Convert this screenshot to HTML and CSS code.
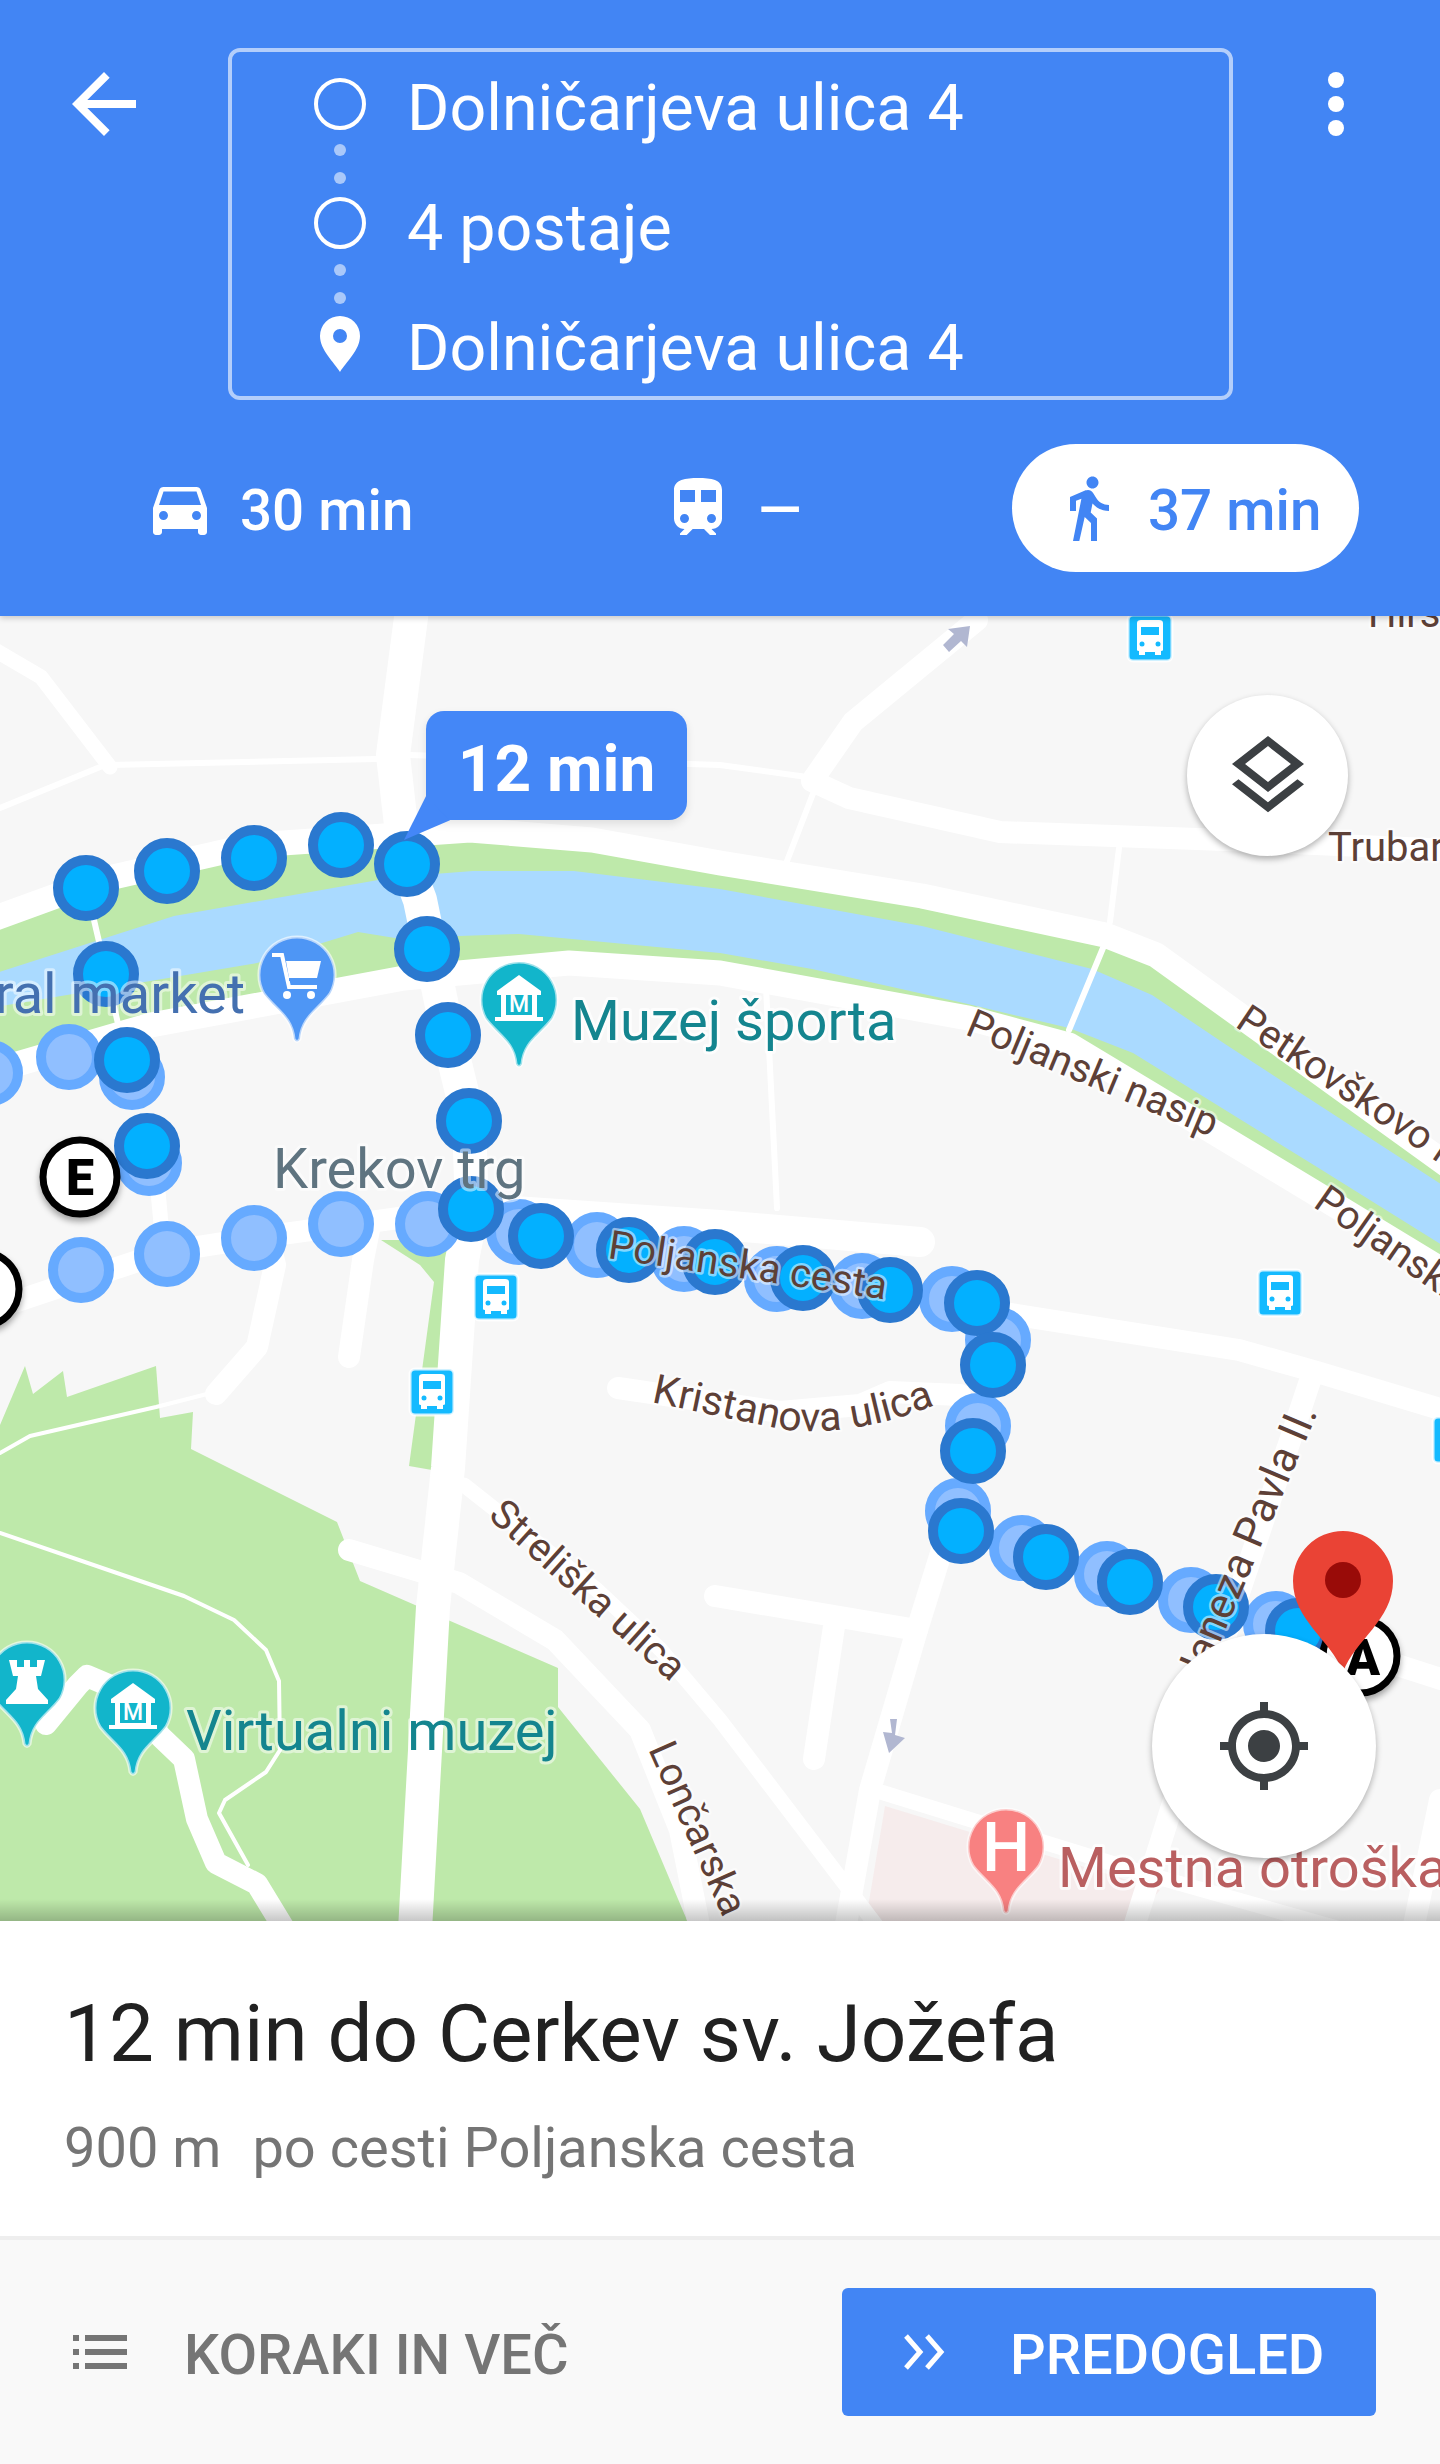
FILE: index.html
```html
<!DOCTYPE html>
<html lang="en">
<head>
    <meta charset="UTF-8">
    <meta name="viewport" content="width=device-width, initial-scale=1.0">
    <title>Dolničarjeva ulica 4</title>
    <link rel="stylesheet" href="styles.css">
</head>
<body>
    <header class="top">
        <div class="top-row">
            <svg class="icon-lg" viewBox="0 0 24 24"><path d="M20 11H7.83l5.59-5.59L12 4l-8 8 8 8 1.41-1.41L7.83 13H20v-2z"/></svg>
            <div class="stops">
                <svg class="stops-icons" viewBox="0 0 60 346">
                    <circle class="stop-ring" cx="30" cy="53" r="24"/>
                    <circle class="stop-dot" cx="30" cy="99" r="6"/>
                    <circle class="stop-dot" cx="30" cy="127" r="6"/>
                    <circle class="stop-ring" cx="30" cy="172" r="24"/>
                    <circle class="stop-dot" cx="30" cy="219" r="6"/>
                    <circle class="stop-dot" cx="30" cy="247" r="6"/>
                    <path class="stop-pin" fill-rule="evenodd" d="M30 265a20 20 0 0 1 20 20c0 14-14 26-20 36-6-10-20-22-20-36a20 20 0 0 1 20-20zm0 13a7 7 0 1 0 0 14 7 7 0 0 0 0-14z"/>
                </svg>
                <div class="stops-text">
                    <div>Dolničarjeva ulica 4</div>
                    <div>4 postaje</div>
                    <div>Dolničarjeva ulica 4</div>
                </div>
            </div>
            <svg class="icon-lg" viewBox="0 0 24 24"><circle cx="12" cy="6" r="2"/><circle cx="12" cy="12" r="2"/><circle cx="12" cy="18" r="2"/></svg>
        </div>
        <div class="modes">
            <div class="mode">
                <svg class="icon-md" viewBox="0 0 24 24"><path d="M18.92 6.01C18.72 5.42 18.16 5 17.5 5h-11c-.66 0-1.21.42-1.42 1.01L3 12v8c0 .55.45 1 1 1h1c.55 0 1-.45 1-1v-1h12v1c0 .55.45 1 1 1h1c.55 0 1-.45 1-1v-8l-2.08-5.99zM6.5 16c-.83 0-1.5-.67-1.5-1.5S5.67 13 6.5 13s1.5.67 1.5 1.5S7.33 16 6.5 16zm11 0c-.83 0-1.5-.67-1.5-1.5s.67-1.5 1.5-1.5 1.5.67 1.5 1.5-.67 1.5-1.5 1.5zM5 11l1.5-4.5h11L19 11H5z"/></svg>
                <span>30 min</span>
            </div>
            <div class="mode">
                <svg class="icon-md" viewBox="0 0 24 24"><path d="M12 2c-4 0-8 .5-8 4v9.5C4 17.43 5.57 19 7.5 19L6 20.5v.5h2.23l2-2H14l2 2h2v-.5L16.5 19c1.93 0 3.5-1.57 3.5-3.5V6c0-3.5-3.58-4-8-4zM7.5 17c-.83 0-1.5-.67-1.5-1.5S6.67 14 7.5 14s1.5.67 1.5 1.5S8.33 17 7.5 17zm3.5-7H6V6h5v4zm2 0V6h5v4h-5zm3.5 7c-.83 0-1.5-.67-1.5-1.5s.67-1.5 1.5-1.5 1.5.67 1.5 1.5-.67 1.5-1.5 1.5z"/></svg>
                <span>—</span>
            </div>
            <div class="mode mode-active">
                <svg class="icon-md" viewBox="0 0 24 24"><path d="M13.5 5.5c1.1 0 2-.9 2-2s-.9-2-2-2-2 .9-2 2 .9 2 2 2zM9.8 8.9L7 23h2.1l1.8-8 2.1 2v6h2v-7.5l-2.1-2 .6-3C14.8 12 16.8 13 19 13v-2c-1.9 0-3.5-1-4.3-2.4l-1-1.6c-.4-.6-1-1-1.7-1-.3 0-.5.1-.8.1L6 8.3V13h2V9.6l1.8-.7"/></svg>
                <span>37 min</span>
            </div>
        </div>
    </header>

    <main class="map">
        <svg class="map-canvas" viewBox="0 616 1440 1305">
            <defs>
                <path id="pin" d="M0 -38A38 38 0 0 1 33 19C20 36 5 42 3 64Q0 69 -3 64C-5 42 -20 36 -33 19A38 38 0 0 1 0 -38Z"/>
                <g id="museum">
                    <use href="#pin" class="pin-teal"/>
                    <path class="glyph" d="M0 -25L22 -9V-5H-22V-9Z"/>
                    <path class="glyph" d="M-18 -5H-13V15H13V-5H18V17H24V21H-24V17H-18Z"/>
                    <text class="glyph-letter" x="0" y="12">M</text>
                </g>
                <g id="bus">
                    <rect class="bus-bg" x="-22" y="-23" width="44" height="46" rx="5"/>
                    <path class="glyph" d="M-13 -15Q-13 -18 -9 -18H9Q13 -18 13 -15V12Q13 13 11 13V17H5V14H-5V17H-11V13Q-13 13 -13 12Z"/>
                    <rect class="bus-hole" x="-9" y="-11" width="18" height="8"/>
                    <circle class="bus-hole" cx="-8" cy="6" r="2.5"/>
                    <circle class="bus-hole" cx="8" cy="6" r="2.5"/>
                </g>
            </defs>

            <rect class="ground" x="0" y="616" width="1440" height="1305"/>
            <path class="hospital" d="M885 1806L1160 1890L1130 1925H865Z"/>

            <path class="park" d="M-10 1425L0 1425L25 1366L33 1394L63 1371L67 1397L156 1366L160 1418L193 1412L191 1449L337 1522L360 1581L415 1605L448 1620L558 1668L558 1707L640 1809L689 1925H-10Z"/>
            <path class="park" d="M381 1240H450L432 1470L409 1466L434 1282L420 1265Z"/>
            <path class="park" d="M-10 922L100 882L254 847L470 832L592 842L720 865L922 898L1105 937L1156 957L1450 1169V1275L1310 1190L1069 1045L968 1018L720 973L569 963L404 978L151 1025L-10 1072Z"/>
            <path class="water" d="M-10 975L174 916L395 877L473 871L574 871L720 889L922 926L1092 969L1152 995L1225 1044L1450 1190V1250L1317 1167L1133 1053L1069 1028L968 1004L812 969L720 953L519 934L459 936L395 938L358 932L257 963L-10 1008Z"/>

            <path class="road-minor" d="M110 765L376 759M-5 810L105 765M409 755L720 765L807 777M814 791L787 861M1119 848L1110 922M1103 948L1069 1030M766 987L777 1208M94 920L119 1028"/>
            <path class="road-mid" d="M-5 650L41 677L110 767"/>
            <path class="road" d="M977 620L853 722L812 781L849 798L1000 832L1225 840L1450 850"/>
            <path class="road" d="M265 1225L275 1265L257 1347L216 1394"/>
            <path class="road" d="M370 1225L363 1260L349 1357"/>
            <path class="road-mid" d="M156 1170L163 1245"/>
            <path class="road" d="M-10 1310L165 1252L254 1238L471 1208"/>
            <path class="road-wide" d="M471 1208L720 1225L920 1242"/>
            <path class="road" d="M985 1310L1239 1350L1317 1372L1450 1412"/>
            <path class="road" d="M618 1388L780 1412L860 1405L890 1392L960 1395"/>
            <path class="road" d="M945 1540L917 1630L870 1790L845 1930"/>
            <path class="road" d="M715 1596L917 1630"/>
            <path class="road" d="M835 1620L814 1759"/>
            <path class="road-mid" d="M871 1789L1150 1875L1450 1960"/>
            <path class="road" d="M1312 1375L1240 1590L1133 1930"/>
            <path class="road" d="M1440 1800L1413 1930"/>
            <path class="road" d="M961 1531L1216 1607L1450 1682"/>
            <path class="road-mid" d="M464 1485L597 1590L661 1650L720 1720L876 1925"/>
            <path class="road" d="M349 1550L459 1583L555 1640L640 1730L680 1830L700 1930"/>
            <path class="road-river" d="M-10 920L100 880L254 845L470 830L592 840L720 863L922 896L1105 935L1156 955L1450 1167"/>
            <path class="road-river" d="M-10 1072L151 1025L404 978L569 963L720 973L968 1018L1069 1045L1310 1190L1450 1275"/>
            <path class="road-major" d="M412 610L393 755L405 860L420 900L448 1035L469 1121L472 1210L462 1260L448 1468L433 1607L415 1930"/>
            <path class="trail" d="M0 1533L184 1596L234 1620L266 1650L279 1681L280 1750L266 1772L225 1800L219 1813L248 1865"/>
            <path class="trail" d="M0 1453L30 1436L156 1407L207 1394"/>
            <path class="road" d="M46 1724L78 1685L87 1676L120 1690L161 1737L184 1759L197 1819L216 1863L257 1884L285 1930"/>

            <path class="one-way" d="M943 645L954 634L948 629L970 626L967 647L961 641L949 652Z"/>
            <path class="one-way" d="M890 1719H897L895 1735L905 1738L889 1753L883 1732L892 1733Z"/>

            <circle class="dot-past" cx="-10" cy="1073" r="28"/>
            <circle class="dot-past" cx="69" cy="1057" r="28"/>
            <circle class="dot-past" cx="132" cy="1077" r="28"/>
            <circle class="dot-past" cx="149" cy="1163" r="28"/>
            <circle class="dot-past" cx="81" cy="1270" r="28"/>
            <circle class="dot-past" cx="167" cy="1254" r="28"/>
            <circle class="dot-past" cx="254" cy="1238" r="28"/>
            <circle class="dot-past" cx="341" cy="1224" r="28"/>
            <circle class="dot-past" cx="428" cy="1224" r="28"/>
            <circle class="dot-past" cx="519" cy="1232" r="28"/>
            <circle class="dot-past" cx="597" cy="1245" r="28"/>
            <circle class="dot-past" cx="684" cy="1259" r="28"/>
            <circle class="dot-past" cx="777" cy="1279" r="28"/>
            <circle class="dot-past" cx="862" cy="1286" r="28"/>
            <circle class="dot-past" cx="952" cy="1299" r="28"/>
            <circle class="dot-past" cx="998" cy="1340" r="28"/>
            <circle class="dot-past" cx="978" cy="1426" r="28"/>
            <circle class="dot-past" cx="958" cy="1511" r="28"/>
            <circle class="dot-past" cx="1022" cy="1548" r="28"/>
            <circle class="dot-past" cx="1107" cy="1574" r="28"/>
            <circle class="dot-past" cx="1191" cy="1600" r="28"/>
            <circle class="dot-past" cx="1276" cy="1624" r="28"/>

            <circle class="dot" cx="106" cy="974" r="28"/>
            <circle class="dot" cx="127" cy="1060" r="28"/>
            <circle class="dot" cx="147" cy="1146" r="28"/>
            <circle class="dot" cx="86" cy="888" r="28"/>
            <circle class="dot" cx="167" cy="871" r="28"/>
            <circle class="dot" cx="254" cy="858" r="28"/>
            <circle class="dot" cx="341" cy="845" r="28"/>
            <circle class="dot" cx="407" cy="864" r="28"/>
            <circle class="dot" cx="427" cy="949" r="28"/>
            <circle class="dot" cx="448" cy="1035" r="28"/>
            <circle class="dot" cx="469" cy="1121" r="28"/>
            <circle class="dot" cx="471" cy="1209" r="28"/>
            <circle class="dot" cx="541" cy="1236" r="28"/>
            <circle class="dot" cx="629" cy="1250" r="28"/>
            <circle class="dot" cx="715" cy="1262" r="28"/>
            <circle class="dot" cx="803" cy="1278" r="28"/>
            <circle class="dot" cx="890" cy="1290" r="28"/>
            <circle class="dot" cx="977" cy="1303" r="28"/>
            <circle class="dot" cx="993" cy="1365" r="28"/>
            <circle class="dot" cx="973" cy="1451" r="28"/>
            <circle class="dot" cx="961" cy="1531" r="28"/>
            <circle class="dot" cx="1046" cy="1557" r="28"/>
            <circle class="dot" cx="1130" cy="1582" r="28"/>
            <circle class="dot" cx="1216" cy="1607" r="28"/>
            <circle class="dot" cx="1298" cy="1631" r="28"/>

            <use href="#bus" x="1150" y="638"/>
            <use href="#bus" x="496" y="1297"/>
            <use href="#bus" x="432" y="1392"/>
            <use href="#bus" x="1280" y="1293"/>
            <use href="#bus" x="1455" y="1440"/>

            <g transform="translate(297 975)">
                <use href="#pin" class="pin-blue"/>
                <path class="glyph-line" d="M-25 -20H-15L-8 12H20"/>
                <path class="glyph" d="M-11 -14H24L20 3H-8Z"/>
                <rect class="pin-cut" x="-8" y="3" width="28" height="3"/>
                <circle class="glyph" cx="-10" cy="20" r="4"/>
                <circle class="glyph" cx="14" cy="20" r="4"/>
            </g>
            <use href="#museum" x="519" y="1000"/>
            <use href="#museum" x="133" y="1708"/>
            <g transform="translate(27 1680)">
                <use href="#pin" class="pin-teal"/>
                <path class="glyph" d="M-18 -20H-10V-13H-3V-20H3V-13H10V-20H18L14 -4H9L11 9L21 20V24H-21V20L-11 9L-9 -4H-14Z"/>
            </g>
            <g transform="translate(1006 1847)">
                <use href="#pin" class="pin-red"/>
                <text class="glyph-h" x="0" y="24">H</text>
            </g>

            <circle class="marker" cx="80" cy="1177" r="37"/>
            <text class="marker-letter" x="80" y="1195">E</text>
            <circle class="marker" cx="-18" cy="1289" r="37"/>
            <circle class="marker" cx="1360" cy="1656" r="37"/>
            <text class="marker-letter" x="1363" y="1675">A</text>
            <path class="end-pin" d="M1343 1531A50 50 0 0 1 1393 1581C1393 1620 1355 1640 1343 1672C1331 1640 1293 1620 1293 1581A50 50 0 0 1 1343 1531Z"/>
            <circle class="end-pin-dot" cx="1343" cy="1580" r="18"/>

            <text class="label-shop" x="245" y="1013" text-anchor="end">Central market</text>
            <text class="label-poi" x="571" y="1040">Muzej športa</text>
            <text class="label-area" x="273" y="1188">Krekov trg</text>
            <text class="label-poi label-park" x="186" y="1750">Virtualni muzej</text>
            <text class="label-hospital" x="1058" y="1887">Mestna otroška bolnica</text>

            <text class="street" x="607" y="1258" transform="rotate(8.5 607 1258)">Poljanska cesta</text>
            <text class="street" x="964" y="1034" transform="rotate(22.6 964 1034)">Poljanski nasip</text>
            <text class="street" x="1234" y="1026" transform="rotate(33.8 1234 1026)">Petkovškovo nabrežje</text>
            <text class="street" x="1312" y="1206" transform="rotate(35 1312 1206)">Poljanski nasip</text>
            <text class="street" x="1328" y="861">Trubarjeva cesta</text>
            <text class="street" x="1368" y="627">Hiršk</text>
            <text class="street" x="487" y="1517" transform="rotate(42 487 1517)">Streliška ulica</text>
            <text class="street" x="648" y="1749" transform="rotate(66 648 1749)">Lončarska</text>
            <text class="street street-large" x="1318" y="1412" text-anchor="end" transform="rotate(-67 1318 1412)">Janeza Pavla II.</text>
            <path id="kristanova" class="guide" d="M651 1402L780 1429Q850 1439 938 1404"/>
            <text class="street street-wide"><textPath href="#kristanova">Kristanova ulica</textPath></text>
        </svg>

        <div class="bubble">12 min</div>
        <button class="fab fab-layers">
            <svg class="icon-lg" viewBox="0 0 24 24"><path d="M11.99 18.54l-7.37-5.73L3 14.07l9 7 9-7-1.63-1.27-7.38 5.74zM12 16l7.36-5.73L21 9l-9-7-9 7 1.63 1.27L12 16zm0-11.47L17.74 9 12 13.47 6.26 9 12 4.53z"/></svg>
        </button>
        <button class="fab fab-locate">
            <svg class="icon-lg" viewBox="0 0 24 24"><path d="M12 8c-2.21 0-4 1.79-4 4s1.79 4 4 4 4-1.79 4-4-1.79-4-4-4zm8.94 3c-.46-4.17-3.77-7.48-7.94-7.94V1h-2v2.06C6.83 3.52 3.52 6.83 3.06 11H1v2h2.06c.46 4.17 3.77 7.48 7.94 7.94V23h2v-2.06c4.17-.46 7.48-3.77 7.94-7.94H23v-2h-2.06zM12 19c-3.87 0-7-3.13-7-7s3.13-7 7-7 7 3.13 7 7-3.13 7-7 7z"/></svg>
        </button>
    </main>

    <section class="summary">
        <h1 class="summary-title">12 min do Cerkev sv. Jožefa</h1>
        <p class="summary-sub"><span class="summary-dist">900 m</span>po cesti Poljanska cesta</p>
    </section>

    <footer class="actions">
        <div class="steps">
            <svg class="steps-icon" viewBox="0 0 54 34"><path d="M0 0h6v6H0zM12 0h42v6H12zM0 14h6v6H0zM12 14h42v6H12zM0 28h6v6H0zM12 28h42v6H12z"/></svg>
            <span>KORAKI IN VEČ</span>
        </div>
        <div class="preview">
            <svg class="preview-icon" viewBox="0 0 44 36"><path d="M3 2L17 18L3 34M24 2L38 18L24 34"/></svg>
            <span>PREDOGLED</span>
        </div>
    </footer>
</body>
</html>
```

FILE: styles.css
```css
* {
    box-sizing: border-box;
}
body {
    margin: 0;
    width: 1440px;
    font-family: Roboto, "Noto Sans", sans-serif;
    background: #fff;
    overflow-x: hidden;
}
.icon-lg {
    width: 96px;
    height: 96px;
    flex: none;
    display: block;
}
.icon-md {
    width: 72px;
    height: 72px;
    flex: none;
    fill: currentColor;
}

/* header */
.top {
    height: 616px;
    padding-top: 48px;
    background: #4285f4;
    color: #fff;
    position: relative;
    z-index: 2;
    box-shadow: 0 2px 6px rgba(0, 0, 0, 0.2);
}
.top-row {
    display: flex;
    align-items: flex-start;
    padding-left: 56px;
}
.top-row > .icon-lg {
    margin-top: 8px;
    fill: #fff;
}
.stops {
    width: 1005px;
    height: 352px;
    margin: 0 55px 0 76px;
    padding-left: 78px;
    border: 4px solid rgba(255, 255, 255, 0.6);
    border-radius: 12px;
    display: flex;
}
.stops-icons {
    width: 60px;
    height: 346px;
    margin-top: -1px;
    flex: none;
}
.stop-ring {
    fill: none;
    stroke: #fff;
    stroke-width: 4px;
}
.stop-dot {
    fill: rgba(255, 255, 255, 0.55);
}
.stop-pin {
    fill: #fff;
}
.stops-text {
    margin: -4px 0 0 37px;
    font-size: 64.6px;
    line-height: 120px;
    white-space: nowrap;
}
.modes {
    display: grid;
    grid-template-columns: 518px 350px 347px;
    margin-top: 44px;
    padding-left: 144px;
}
.mode {
    display: flex;
    align-items: center;
    gap: 24px;
    height: 128px;
    font-size: 56.5px;
    font-weight: 500;
}
.mode span {
    padding-top: 6px;
}
.mode-active {
    padding-left: 40px;
    background: #fff;
    color: #4285f4;
    border-radius: 64px;
}

/* map */
.map {
    height: 1305px;
    position: relative;
    overflow: hidden;
}
.map::after {
    content: "";
    position: absolute;
    left: 0;
    right: 0;
    bottom: 0;
    height: 22px;
    background: linear-gradient(rgba(0, 0, 0, 0), rgba(0, 0, 0, 0.22));
}
.map-canvas {
    display: block;
    width: 1440px;
    height: 1305px;
}
.ground {
    fill: #f7f7f7;
}
.hospital {
    fill: #f6ecec;
}
.park {
    fill: #bee9aa;
}
.water {
    fill: #aadaff;
}
.road-major, .road-river, .road-wide, .road, .road-mid, .road-minor, .trail {
    fill: none;
    stroke: #fff;
    stroke-linecap: round;
    stroke-linejoin: round;
}
.road-major { stroke-width: 34px; stroke-linecap: butt; }
.road-river { stroke-width: 25px; }
.road-wide { stroke-width: 30px; }
.road { stroke-width: 22px; }
.road-mid { stroke-width: 15px; }
.road-minor { stroke-width: 6px; }
.trail { stroke-width: 4px; }
.guide {
    fill: none;
}
.one-way {
    fill: #b1b7d1;
}
.dot-past {
    fill: #90bfff;
    stroke: #66aaff;
    stroke-width: 10px;
}
.dot {
    fill: #03b0ff;
    stroke: #2a78cf;
    stroke-width: 10px;
}
.pin-teal { fill: #12b5cb; stroke: rgba(255, 255, 255, 0.6); stroke-width: 3px; }
.pin-blue { fill: #4e96f5; stroke: rgba(255, 255, 255, 0.6); stroke-width: 3px; }
.pin-red { fill: #f88181; stroke: rgba(255, 255, 255, 0.6); stroke-width: 3px; }
.pin-cut { fill: #4e96f5; }
.glyph {
    fill: #fff;
}
.glyph-line {
    fill: none;
    stroke: #fff;
    stroke-width: 4px;
}
.glyph-letter {
    fill: #fff;
    font-size: 23px;
    font-weight: 500;
    text-anchor: middle;
}
.glyph-h {
    fill: #fff;
    font-size: 68px;
    font-weight: 500;
    text-anchor: middle;
}
.bus-bg {
    fill: #14baff;
    stroke: rgba(255, 255, 255, 0.8);
    stroke-width: 3px;
}
.bus-hole {
    fill: #14baff;
}
.marker {
    fill: #fff;
    stroke: #000;
    stroke-width: 7px;
    filter: drop-shadow(0 4px 3px rgba(0, 0, 0, 0.35));
}
.marker-letter {
    font-size: 50px;
    font-weight: 900;
    text-anchor: middle;
}
.end-pin {
    fill: #ea4335;
}
.end-pin-dot {
    fill: #990b08;
}
.label-shop, .label-poi, .label-area, .label-hospital, .street {
    paint-order: stroke;
    stroke-linejoin: round;
}
.label-shop {
    font-size: 56px;
    fill: #4470b0;
    stroke: rgba(255, 255, 255, 0.5);
    stroke-width: 6px;
}
.label-poi {
    font-size: 56px;
    fill: #14858f;
    stroke: rgba(255, 255, 255, 0.7);
    stroke-width: 6px;
}
.label-park {
    stroke: rgba(255, 255, 255, 0.5);
}
.label-area {
    font-size: 56px;
    fill: #5f7480;
    stroke: rgba(255, 255, 255, 0.5);
    stroke-width: 6px;
}
.label-hospital {
    font-size: 56px;
    fill: #b95f60;
    stroke: rgba(255, 255, 255, 0.7);
    stroke-width: 6px;
}
.street {
    font-size: 40px;
    fill: #5d4037;
    stroke: rgba(255, 255, 255, 0.5);
    stroke-width: 5px;
}
.street-wide {
    font-size: 41px;
}
.street-large {
    font-size: 43px;
}
.bubble {
    position: absolute;
    left: 426px;
    top: 95px;
    width: 261px;
    height: 109px;
    background: #4487f7;
    border-radius: 18px;
    color: #fff;
    font-size: 64px;
    font-weight: 700;
    line-height: 117px;
    text-align: center;
    box-shadow: 0 4px 8px rgba(0, 0, 0, 0.1);
}
.bubble::after {
    content: "";
    position: absolute;
    left: -22px;
    top: 85px;
    width: 46px;
    height: 44px;
    background: #4487f7;
    clip-path: polygon(48% 0, 100% 55%, 0 100%);
}
.fab {
    position: absolute;
    padding: 0;
    border: none;
    border-radius: 50%;
    background: #fff;
    fill: #3c4043;
    display: flex;
    align-items: center;
    justify-content: center;
    box-shadow: 0 3px 6px rgba(0, 0, 0, 0.3);
}
.fab-layers {
    left: 1187px;
    top: 79px;
    width: 161px;
    height: 161px;
}
.fab-locate {
    left: 1152px;
    top: 1018px;
    width: 224px;
    height: 224px;
}

/* bottom panel */
.summary {
    height: 315px;
    padding: 61px 64px 0;
    background: #fff;
}
.summary-title {
    margin: 0;
    font-size: 80px;
    font-weight: 400;
    line-height: 104px;
    color: #212121;
}
.summary-sub {
    margin: 26px 0 0;
    font-size: 56px;
    line-height: 72px;
    color: #757575;
}
.summary-dist {
    margin-right: 31px;
}
.actions {
    height: 228px;
    padding: 48px 64px 0 73px;
    display: flex;
    justify-content: space-between;
    background: #f9f9f9;
    border-top: 4px solid #eee;
}
.steps {
    display: flex;
    align-items: center;
    gap: 57px;
    height: 128px;
    font-size: 56px;
    font-weight: 500;
    color: #757575;
}
.steps span, .preview span {
    padding-top: 6px;
}
.steps-icon {
    width: 54px;
    height: 34px;
    fill: #757575;
}
.preview {
    width: 534px;
    height: 128px;
    padding-left: 61px;
    display: flex;
    align-items: center;
    gap: 63px;
    background: #4285f4;
    border-radius: 6px;
    color: #fff;
    font-size: 56px;
    font-weight: 500;
}
.preview-icon {
    width: 44px;
    height: 36px;
    fill: none;
    stroke: #fff;
    stroke-width: 5px;
}
```
